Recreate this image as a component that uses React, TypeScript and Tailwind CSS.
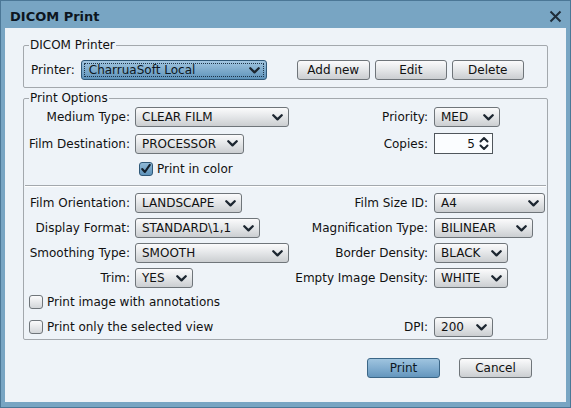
import type { ReactNode } from 'react';

const font = "font-['DejaVu_Sans',sans-serif]";

function Chevron() {
  return (
    <svg width="11" height="7" viewBox="0 0 11 7" className="shrink-0">
      <path d="M1.3 1.3 L5.5 5.4 L9.7 1.3" fill="none" stroke="#1c2630" strokeWidth="2.3" strokeLinecap="round" strokeLinejoin="round" />
    </svg>
  );
}

function Combo({ value, w, focused }: { value: string; w: string; focused?: boolean }) {
  if (focused) {
    return (
      <div className={`${w} h-[20px] rounded-[3px] border border-[#2f5878] bg-[linear-gradient(to_bottom,#a3c6e0,#7eabcc_50%,#5f93ba)] p-[2px]`}>
        <div className="h-full flex items-center justify-between pl-[4px] pr-[3px] border border-dotted border-[#1d3347] rounded-[1px]">
          <span className="text-[12px] text-[#0d1722] leading-none">{value}</span>
          <Chevron />
        </div>
      </div>
    );
  }
  return (
    <div className={`${w} h-[20px] rounded-[3px] border border-[#6f757a] bg-[linear-gradient(to_bottom,#fbfbfc,#e6e8ea_45%,#cbced1)] flex items-center justify-between pl-[6px] pr-[5px]`}>
      <span className="text-[12px] text-[#111] leading-none whitespace-nowrap">{value}</span>
      <Chevron />
    </div>
  );
}

function Button({ children, w, primary }: { children: ReactNode; w: string; primary?: boolean }) {
  return (
    <div
      className={`${w} h-[20px] rounded-[3px] border flex items-center justify-center text-[12px] leading-none ${
        primary
          ? 'border-[#3b6687] bg-[linear-gradient(to_bottom,#9fc4df,#82aed0_50%,#6496bd)] text-[#0d1722]'
          : 'border-[#6f757a] bg-[linear-gradient(to_bottom,#fbfbfc,#e6e8ea_45%,#cbced1)] text-[#111]'
      }`}
    >
      {children}
    </div>
  );
}

function Check({ checked, label }: { checked?: boolean; label: string }) {
  return (
    <div className="flex items-center gap-[4px]">
      {checked ? (
        <div className="w-[14px] h-[14px] rounded-[3px] border border-[#2f5878] bg-[linear-gradient(to_bottom,#8fb8d6,#5f93ba)] flex items-center justify-center">
          <svg width="12" height="12" viewBox="0 0 12 12">
            <path d="M2.2 6 L4.9 9 L9.8 1.8" fill="none" stroke="#14202c" strokeWidth="2.1" strokeLinecap="round" strokeLinejoin="round" />
          </svg>
        </div>
      ) : (
        <div className="w-[14px] h-[14px] rounded-[3px] border border-[#6f757a] bg-[linear-gradient(to_bottom,#fbfbfc,#d3d6d9)]" />
      )}
      <span className="text-[12px] text-[#111] leading-none">{label}</span>
    </div>
  );
}

function Row({ children, className = '' }: { children: ReactNode; className?: string }) {
  return <div className={`grid grid-cols-[111px_154px_145px_1fr] items-center h-[20px] ${className}`}>{children}</div>;
}

function LeftLabel({ children }: { children: ReactNode }) {
  return <span className="text-right pr-[5px] text-[12px] text-[#111] whitespace-nowrap leading-none">{children}</span>;
}

function RightLabel({ children }: { children: ReactNode }) {
  return <span className="text-right pr-[6px] text-[12px] text-[#111] whitespace-nowrap leading-none">{children}</span>;
}

function Spin({ value }: { value: string }) {
  return (
    <div className="w-[59px] h-[21px] border border-[#50565c] bg-[#fbfdff] flex items-center justify-end gap-[4px] pr-[3px]">
      <span className="text-[12px] text-[#111] leading-none">{value}</span>
      <svg width="10" height="15" viewBox="0 0 10 15">
        <path d="M1.5 5.5 L5 2 L8.5 5.5 M1.5 9.5 L5 13 L8.5 9.5" fill="none" stroke="#1c2630" strokeWidth="2" strokeLinecap="round" strokeLinejoin="round" />
      </svg>
    </div>
  );
}

export default function App() {
  return (
    <div className={`${font} w-[571px] h-[408px] bg-[#78a5c3] border border-[#4b7796] flex flex-col`}>
      {/* title bar */}
      <div className="h-[27px] flex items-center justify-between pl-[9px] pr-[8px] pt-[3px]">
        <span className="text-[13px] font-bold text-[#0d1620] leading-none">DICOM Print</span>
        <svg width="13" height="13" viewBox="0 0 13 13">
          <path d="M1.5 1.5 L11.5 11.5 M11.5 1.5 L1.5 11.5" stroke="#1f2d3a" strokeWidth="2" />
        </svg>
      </div>

      <div className="flex-1 mx-[4px] mb-[5px] bg-[#eef3f8] flex flex-col px-[18px] pt-[10px]">
        {/* DICOM Printer */}
        <fieldset className="border border-[#a3a8ad] rounded-[2px] px-[7px] pt-[8px] pb-[7px]">
          <legend className="-ml-[2px] px-[1px] text-[12px] leading-[14px] text-[#111]">DICOM Printer</legend>
          <div className="flex items-center h-[20px]">
            <span className="text-[12px] text-[#111] leading-none">Printer:</span>
            <div className="ml-[6px]">
              <Combo value="CharruaSoft Local" w="w-[186px]" focused />
            </div>
            <div className="flex gap-[5px] ml-[30px]">
              <Button w="w-[73px]">Add new</Button>
              <Button w="w-[72px]">Edit</Button>
              <Button w="w-[72px]">Delete</Button>
            </div>
          </div>
        </fieldset>

        {/* Print Options */}
        <fieldset className="mt-[3px] border border-[#a3a8ad] rounded-[2px] pt-[2px] pb-[2px]">
          <legend className="ml-[5px] px-[1px] text-[12px] leading-[14px] text-[#111]">Print Options</legend>

          <Row>
            <LeftLabel>Medium Type:</LeftLabel>
            <Combo value="CLEAR FILM" w="w-[154px]" />
            <RightLabel>Priority:</RightLabel>
            <Combo value="MED" w="w-[66px]" />
          </Row>
          <Row className="mt-[6px]">
            <LeftLabel>Film Destination:</LeftLabel>
            <Combo value="PROCESSOR" w="w-[109px]" />
            <RightLabel>Copies:</RightLabel>
            <Spin value="5" />
          </Row>
          <Row className="mt-[6px]">
            <span />
            <div className="pl-[4px]">
              <Check checked label="Print in color" />
            </div>
          </Row>

          <div className="mt-[6px] mx-[1px] h-[2px] border-t border-[#a3a8ad] border-b border-b-white" />

          <Row className="mt-[6px]">
            <LeftLabel>Film Orientation:</LeftLabel>
            <Combo value="LANDSCAPE" w="w-[107px]" />
            <RightLabel>Film Size ID:</RightLabel>
            <Combo value="A4" w="w-[111px]" />
          </Row>
          <Row className="mt-[5px]">
            <LeftLabel>Display Format:</LeftLabel>
            <Combo value="STANDARD\1,1" w="w-[125px]" />
            <RightLabel>Magnification Type:</RightLabel>
            <Combo value="BILINEAR" w="w-[99px]" />
          </Row>
          <Row className="mt-[5px]">
            <LeftLabel>Smoothing Type:</LeftLabel>
            <Combo value="SMOOTH" w="w-[154px]" />
            <RightLabel>Border Density:</RightLabel>
            <Combo value="BLACK" w="w-[74px]" />
          </Row>
          <Row className="mt-[5px]">
            <LeftLabel>Trim:</LeftLabel>
            <Combo value="YES" w="w-[58px]" />
            <RightLabel>Empty Image Density:</RightLabel>
            <Combo value="WHITE" w="w-[74px]" />
          </Row>

          <div className="mt-[4px] h-[20px] flex items-center pl-[5px]">
            <Check label="Print image with annotations" />
          </div>
          <Row className="mt-[5px]">
            <div className="col-span-2 pl-[5px]">
              <Check label="Print only the selected view" />
            </div>
            <RightLabel>DPI:</RightLabel>
            <Combo value="200" w="w-[59px]" />
          </Row>
        </fieldset>

        <div className="flex justify-end gap-[19px] mt-[18px] pr-[16px]">
          <Button w="w-[73px]" primary>Print</Button>
          <Button w="w-[73px]">Cancel</Button>
        </div>
      </div>
    </div>
  );
}
